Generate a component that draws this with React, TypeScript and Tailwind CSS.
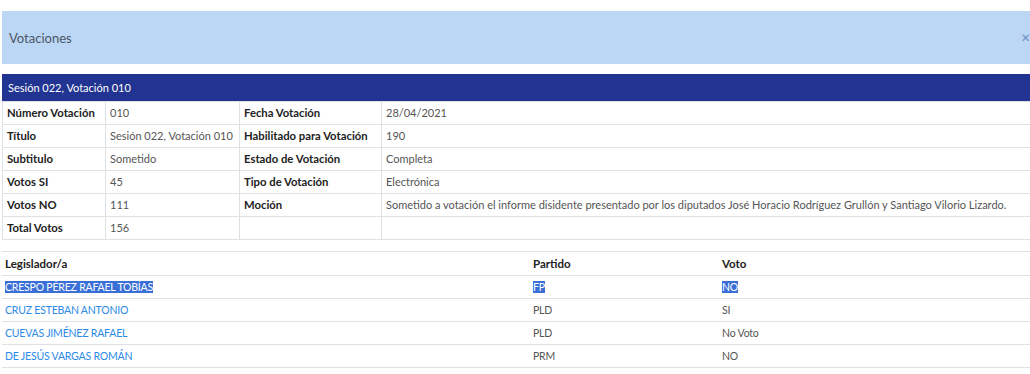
const info: [string, string, string, string][] = [
  ["Número Votación", "010", "Fecha Votación", "28/04/2021"],
  ["Título", "Sesión 022, Votación 010", "Habilitado para Votación", "190"],
  ["Subtitulo", "Sometido", "Estado de Votación", "Completa"],
  ["Votos SI", "45", "Tipo de Votación", "Electrónica"],
  [
    "Votos NO",
    "111",
    "Moción",
    "Sometido a votación el informe disidente presentado por los diputados José Horacio Rodríguez Grullón y Santiago Vilorio Lizardo.",
  ],
  ["Total Votos", "156", "", ""],
];

const votes = [
  { name: "CRESPO PÉREZ RAFAEL TOBÍAS", party: "FP", vote: "NO", selected: true },
  { name: "CRUZ ESTEBAN ANTONIO", party: "PLD", vote: "SI" },
  { name: "CUEVAS JIMÉNEZ RAFAEL", party: "PLD", vote: "No Voto" },
  { name: "DE JESÚS VARGAS ROMÁN", party: "PRM", vote: "NO" },
];

function Sel({ on, children }: { on?: boolean; children: React.ReactNode }) {
  if (!on) return <>{children}</>;
  return <span className="bg-[#3a6fd8] text-white">{children}</span>;
}

export default function App() {
  return (
    <div className="w-full min-h-screen overflow-hidden bg-white text-[11px] leading-[16px] whitespace-nowrap font-['Lato',sans-serif]">
      <div className="w-[1040px] pl-[2px] pt-[11px]">
        <div className="flex h-[53px] items-center justify-between bg-[#bcd6f5] pl-[7px] pr-[10px]">
          <span className="text-[13px] text-[#4a5766]">Votaciones</span>
          <span className="text-[15px] leading-none text-[#6f8bc9]">×</span>
        </div>

        <div className="mt-[10px] flex h-[27px] items-center bg-[#213491] pl-[6px] text-[11px] text-white">
          Sesión 022, Votación 010
        </div>

        <table className="w-full table-fixed border-collapse">
          <colgroup>
            <col className="w-[103px]" />
            <col className="w-[134px]" />
            <col className="w-[142px]" />
            <col />
          </colgroup>
          <tbody>
            {info.map((r, i) => (
              <tr key={i} className="h-[23px]">
                <td className="border border-[#dee2e6] pl-[4px] text-[11.3px] font-bold text-[#222]">{r[0]}</td>
                <td className="border border-[#dee2e6] pl-[4px] text-[#555]">{r[1]}</td>
                <td className="border border-[#dee2e6] pl-[4px] text-[11.3px] font-bold text-[#222]">{r[2]}</td>
                <td className="border border-[#dee2e6] border-r-0 pl-[4px] text-[#555]">{r[3]}</td>
              </tr>
            ))}
          </tbody>
        </table>

        <table className="mt-[11px] w-full table-fixed border-collapse">
          <colgroup>
            <col className="w-[528px]" />
            <col className="w-[189px]" />
            <col />
          </colgroup>
          <thead>
            <tr className="h-[24px] border-y border-[#dee2e6]">
              <th className="pl-[3px] text-left text-[11.5px] font-bold text-[#222]">Legislador/a</th>
              <th className="pl-[3px] text-left text-[11.5px] font-bold text-[#222]">Partido</th>
              <th className="pl-[3px] text-left text-[11.5px] font-bold text-[#222]">Voto</th>
            </tr>
          </thead>
          <tbody>
            {votes.map((v) => (
              <tr key={v.name} className="h-[23px] border-b border-[#dee2e6]">
                <td className="pl-[3px] text-[10.5px] tracking-[-0.2px] text-[#2b8ae6]">
                  <Sel on={v.selected}>{v.name}</Sel>
                </td>
                <td className="pl-[3px] text-[10.5px] tracking-[-0.2px] text-[#555]">
                  <Sel on={v.selected}>{v.party}</Sel>
                </td>
                <td className="pl-[3px] text-[10.5px] tracking-[-0.2px] text-[#555]">
                  <Sel on={v.selected}>{v.vote}</Sel>
                </td>
              </tr>
            ))}
          </tbody>
        </table>
      </div>
    </div>
  );
}
